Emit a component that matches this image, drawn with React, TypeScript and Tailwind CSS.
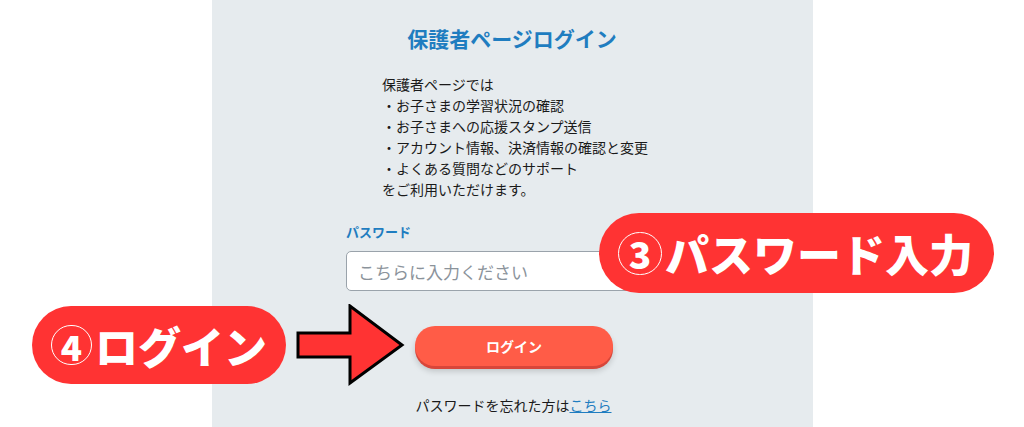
const jp = { fontFamily: '"Noto Sans CJK JP", "Noto Sans", sans-serif' };

export default function App() {
  return (
    <div className="relative w-[1024px] h-[427px] overflow-hidden bg-white" style={jp}>
      {/* login panel */}
      <div className="mx-auto w-[601px] h-full bg-[#e6ebee] flex flex-col items-center pt-[24px]">
        <h1 className="text-[21px] leading-[28px] font-bold text-[#1f7dc0]">保護者ページログイン</h1>

        <div className="mt-[22px] text-[14px] leading-[21px] text-[#1a1a1a] pl-[6px]">
          <p>保護者ページでは</p>
          <p>・お子さまの学習状況の確認</p>
          <p>・お子さまへの応援スタンプ送信</p>
          <p>・アカウント情報、決済情報の確認と変更</p>
          <p>・よくある質問などのサポート</p>
          <p>をご利用いただけます。</p>
        </div>

        <div className="mt-[24px] w-[332px] flex flex-col">
          <label className="text-[13px] leading-[16px] font-bold text-[#1f7dc0]">パスワード</label>
          <input
            type="password"
            placeholder="こちらに入力ください"
            className="mt-[11px] h-[40px] w-full rounded-[5px] border border-[#9aa3ab] bg-white px-[11px] text-[17px] placeholder:text-[#8b939b] outline-none"
            style={jp}
          />
        </div>

        <button
          className="mt-[35px] ml-[4px] w-[198px] h-[40px] rounded-full bg-[#ff5c47] text-white text-[14px] font-bold shadow-[0_3px_0_#d8463a,0_5px_6px_rgba(0,0,0,0.18)]"
          style={jp}
        >
          ログイン
        </button>

        <p className="mt-[29px] ml-[3px] text-[14px] leading-[20px] text-[#1a1a1a]">
          パスワードを忘れた方は<a className="text-[#1f7dc0] underline">こちら</a>
        </p>
      </div>

      {/* annotations */}
      <div className="absolute left-[599px] top-[213px] w-[395px] h-[80px] rounded-full bg-[#ff3333] flex items-center justify-center gap-[3px] text-white pr-[2px]">
        <span className="w-[44px] h-[43px] shrink-0 rounded-full border-[1.5px] border-white flex items-center justify-center text-[37px] leading-none font-black">
          3
        </span>
        <span className="text-[44px] leading-none font-black">パスワード入力</span>
      </div>

      <div className="absolute left-[32px] top-[306px] w-[254px] h-[78px] rounded-full bg-[#ff3333] flex items-center justify-center gap-[3px] text-white">
        <span className="w-[41px] h-[40px] shrink-0 rounded-full border-[1.5px] border-white flex items-center justify-center text-[35px] leading-none font-black">
          4
        </span>
        <span className="text-[43px] leading-none font-black">ログイン</span>
      </div>

      <svg className="absolute left-[296px] top-[304px]" width="110" height="82" viewBox="0 0 110 82">
        <polygon
          points="2,29 54,29 54,2 106,41 54,79 54,53 2,53"
          fill="#ff3333"
          stroke="#000"
          strokeWidth="3"
          strokeLinejoin="miter"
        />
      </svg>
    </div>
  );
}
